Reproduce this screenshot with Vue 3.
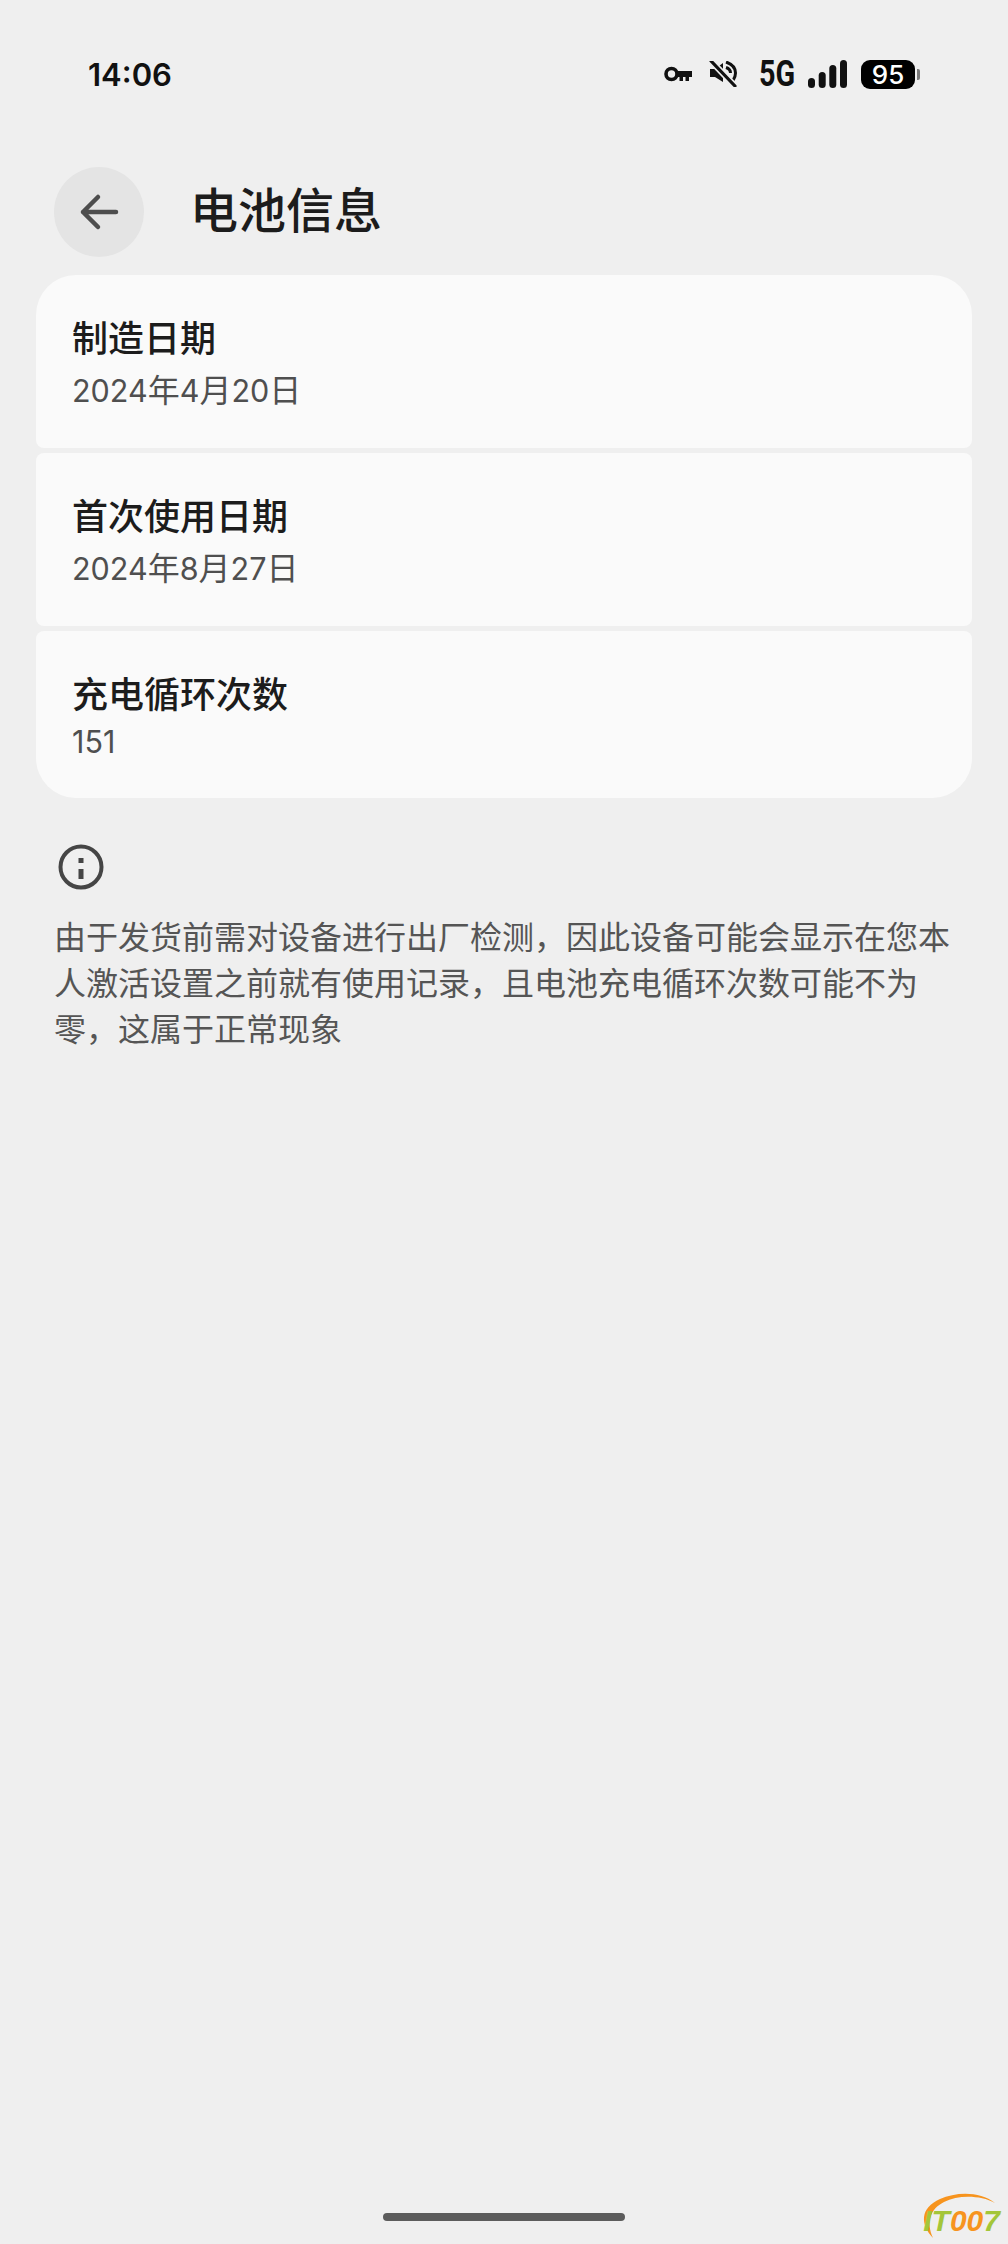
<template>
  <div class="page">
    <div class="status-bar">
      <span class="time">14:06</span>
      <div class="status-icons">
        <svg class="ic-key" width="28" height="16" viewBox="0 0 28 16">
          <circle cx="7.500" cy="8" r="5.500" fill="none" stroke="#111" stroke-width="3.600" />
          <path d="M12 5H28V11H25V15H21.500V11H19V15H15.500V11H12Z" fill="#111" />
          <rect x="5" y="6.500" width="6" height="3" rx="1.500" fill="#eee" />
        </svg>
        <svg class="ic-mute" width="28" height="26" viewBox="0 0 28 26">
          <path d="M1 8H6L14 2V21L6 16H1Z" fill="#111" />
          <path d="M17 1C23 3 26.500 7 26.500 12C26.500 15 25.500 17.500 24 19.500M17 6.500C20 7.500 21.500 9.500 21.500 12" fill="none" stroke="#111" stroke-width="3" />
          <path d="M2 0L26 25" stroke="#eee" stroke-width="6.500" />
          <path d="M2 0L26 25" stroke="#111" stroke-width="3.200" stroke-linecap="round" />
        </svg>
        <span class="net">5G</span>
        <svg class="ic-signal" width="39" height="28" viewBox="0 0 39 28">
          <rect x="0" y="18" width="7" height="10" rx="3.500" fill="#111" />
          <rect x="10.700" y="12" width="7" height="16" rx="3.500" fill="#111" />
          <rect x="21.300" y="5" width="7" height="23" rx="3.500" fill="#111" />
          <rect x="32" y="0" width="7" height="28" rx="3.500" fill="#111" />
        </svg>
        <div class="battery">
          <span class="battery-body">95</span>
          <span class="battery-tail"></span>
        </div>
      </div>
    </div>

    <div class="header">
      <button class="back-btn">
        <svg width="40" height="38" viewBox="0 0 40 38">
          <path d="M37 19H4M19 4L4 19L19 34" fill="none" stroke="#4d4d4d" stroke-width="4.500" stroke-linecap="round" stroke-linejoin="round" />
        </svg>
      </button>
      <div class="title">电池信息</div>
    </div>

    <div class="card-list">
      <div v-for="item in items" :key="item.label" class="card">
        <div class="card-label">{{ item.label }}</div>
        <div class="card-value">
          <span v-for="(part, i) in splitValue(item.value)" :key="i" :class="{ digits: /\d/.test(part) }">{{ part }}</span>
        </div>
      </div>
    </div>

    <div class="notice">
      <svg class="ic-info" width="48" height="48" viewBox="0 0 48 48">
        <circle cx="24" cy="24" r="20.500" fill="none" stroke="#454545" stroke-width="4" />
        <rect x="21.500" y="26" width="5" height="10" fill="#454545" />
        <rect x="21.500" y="15" width="5" height="5" fill="#454545" />
      </svg>
      <p class="notice-text">由于发货前需对设备进行出厂检测，因此设备可能会显示在您本人激活设置之前就有使用记录，且电池充电循环次数可能不为零，这属于正常现象</p>
    </div>

    <div class="home-bar"></div>

    <div class="watermark">
      <svg width="84" height="52" viewBox="0 0 84 52">
        <path d="M13 48C0 34 0 18 20 9C36 2 60 1 75 13C60 5 38 5 24 12C10 19 6 32 13 48Z" fill="#f7941e" />
      </svg>
      <span class="wm-it">IT</span><span class="wm-00">00</span><span class="wm-7">7</span>
    </div>
  </div>
</template>

<script setup>
const items = [
  { label: '制造日期', value: '2024年4月20日' },
  { label: '首次使用日期', value: '2024年8月27日' },
  { label: '充电循环次数', value: '151' }
]

// 数字比汉字窄一号，单独拆出来
const splitValue = (value) => value.split(/(\d+)/).filter(Boolean)
</script>

<style>
html, body {
  margin: 0;
  background: #efefef;
}
</style>

<style scoped>
.page {
  position: relative;
  width: 1008px;
  height: 2244px;
  box-sizing: border-box;
  background: #efefef;
  display: flex;
  flex-direction: column;
  font-family: "Roboto", "Noto Sans CJK SC", sans-serif;
  overflow: hidden;
}

.status-bar {
  height: 32px;
  margin-top: 58px;
  padding: 0 88px;
  display: flex;
  align-items: center;
  justify-content: space-between;
}

.time {
  font-family: "Inter", sans-serif;
  font-size: 31px;
  font-weight: 600;
  color: #111;
}

.status-icons {
  display: flex;
  align-items: center;
}

.ic-key { margin-right: 17px; }
.ic-mute { margin-right: 22px; }

.net {
  display: block;
  width: 36px;
  margin-right: 13px;
  font-family: "Roboto", sans-serif;
  font-size: 36px;
  font-weight: 700;
  line-height: 32px;
  color: #111;
  white-space: nowrap;
  transform: scaleX(0.8);
  transform-origin: left center;
}

.ic-signal { margin-right: 14px; }

.battery {
  display: flex;
  align-items: center;
}

.battery-body {
  width: 54px;
  height: 29px;
  border-radius: 9px;
  background: #000;
  color: #fff;
  font-family: "Inter", sans-serif;
  font-size: 26px;
  font-weight: 500;
  line-height: 29px;
  text-align: center;
}

.battery-tail {
  width: 3px;
  height: 11px;
  margin-left: 2px;
  border-radius: 0 2px 2px 0;
  background: #777;
}

.header {
  display: flex;
  align-items: center;
  margin-top: 77px;
  padding-left: 54px;
}

.back-btn {
  width: 90px;
  height: 90px;
  padding: 0;
  border: none;
  border-radius: 50%;
  background: #e4e4e4;
  display: flex;
  align-items: center;
  justify-content: center;
}

.title {
  margin-left: 46px;
  font-size: 48px;
  font-weight: 500;
  line-height: 60px;
  color: #1c1c1c;
}

.card-list {
  margin: 18px 36px 0;
  display: flex;
  flex-direction: column;
  gap: 5px;
}

.card {
  height: 173px;
  box-sizing: border-box;
  padding: 40px 36px 0;
  background: #fafafa;
  border-radius: 8px;
}

.card:first-child {
  border-radius: 40px 40px 8px 8px;
}

.card:last-child {
  height: 167px;
  border-radius: 8px 8px 40px 40px;
}

.card-label {
  font-size: 36px;
  font-weight: 500;
  line-height: 50px;
  color: #1c1c1c;
}

.card-value {
  font-size: 32px;
  line-height: 42px;
  color: #4f4f4f;
  margin-top: 5px;
}

.card:last-child .card-value {
  margin-top: 0;
}

.digits {
  font-family: "Inter", sans-serif;
  font-size: 30.500px;
}

.notice {
  margin-top: 45px;
  padding: 0 54px;
}

.ic-info {
  display: block;
  margin-left: 3px;
}

.notice-text {
  margin: 24px 0 0;
  font-size: 32px;
  line-height: 46px;
  color: #555;
}

.home-bar {
  position: absolute;
  left: 383px;
  bottom: 23px;
  width: 242px;
  height: 8px;
  border-radius: 4px;
  background: #5c5c5c;
}

.watermark {
  position: absolute;
  right: 4px;
  bottom: 2px;
  width: 84px;
  height: 52px;
  box-sizing: border-box;
  padding: 0 4px 6px 0;
  font-family: "Liberation Sans", sans-serif;
  font-size: 30px;
  font-weight: 700;
  font-style: italic;
  line-height: 30px;
  display: flex;
  align-items: flex-end;
  justify-content: flex-end;
}

.watermark svg {
  position: absolute;
  left: 0;
  top: 0;
}

.wm-it, .wm-7 { color: #a4c639; position: relative; }
.wm-00 { color: #f7941e; position: relative; }
</style>
